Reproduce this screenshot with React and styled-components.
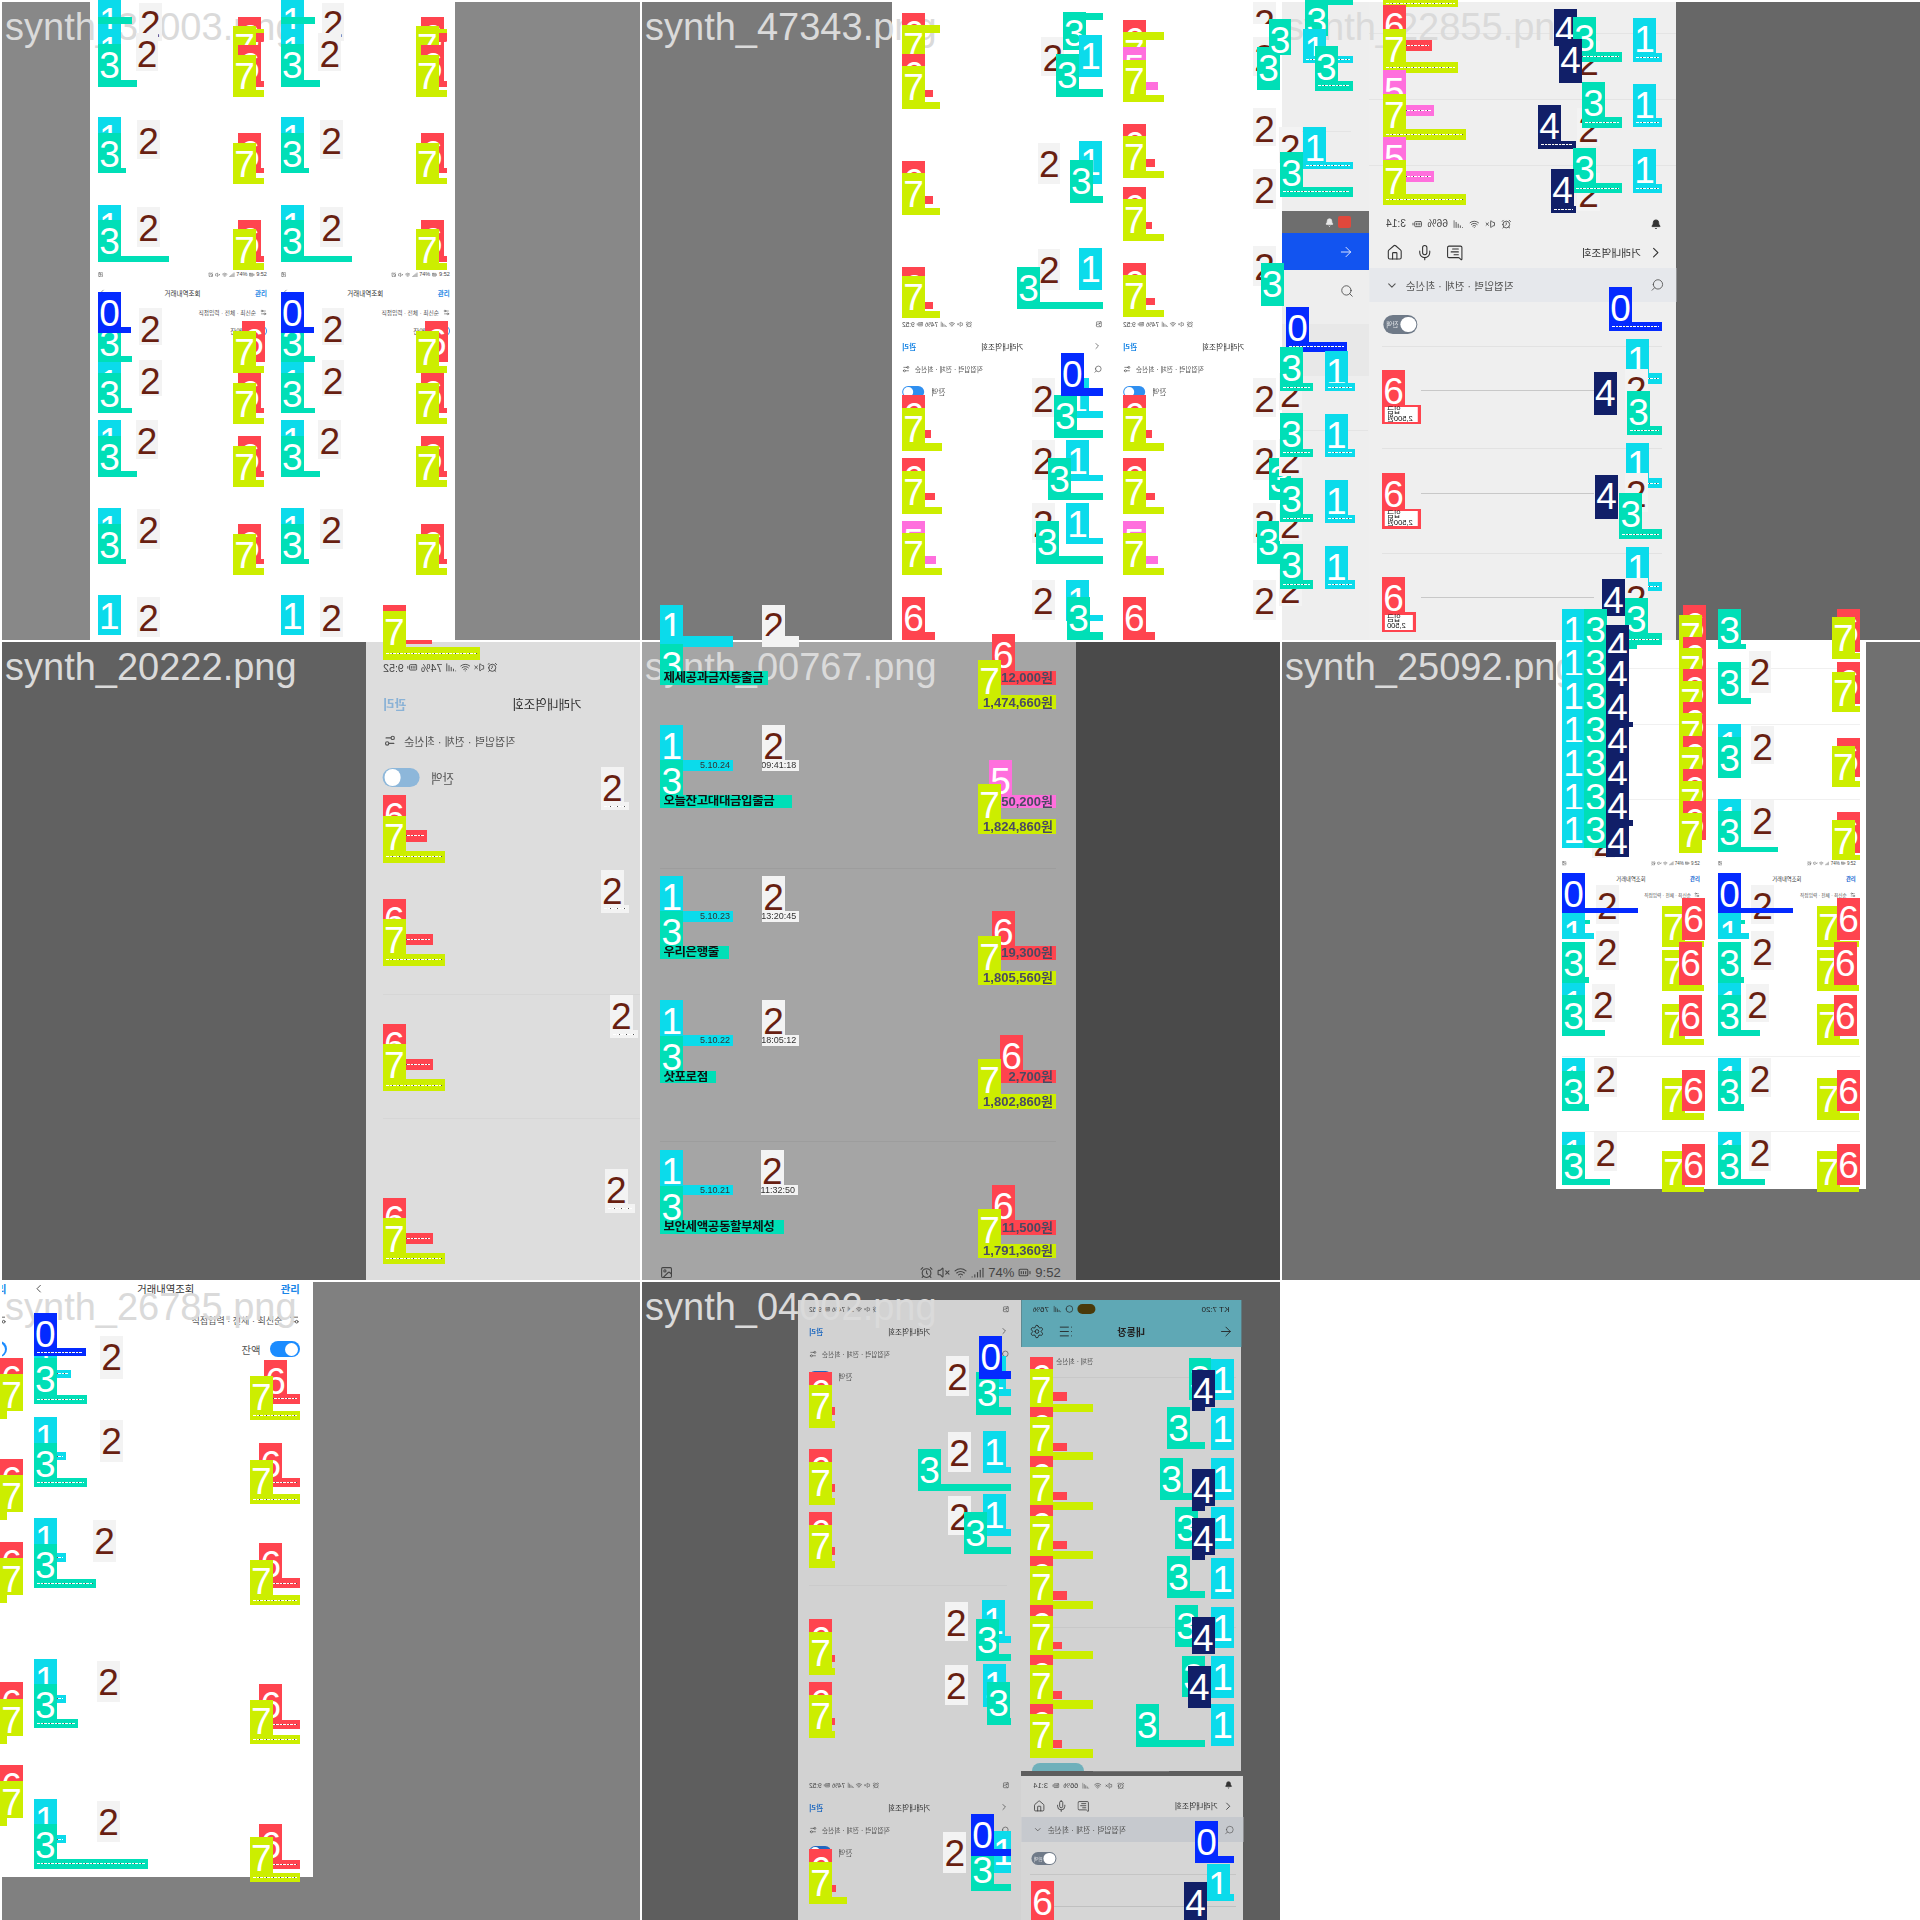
import styled, { createGlobalStyle } from "styled-components";
import {
  AlarmClock, ArrowRight, BatteryFull, Bell, ChevronDown, ChevronLeft, Circle, Home, Image,
  List, MessageSquareText, Mic, Search, Settings, Settings2, Signal, VolumeX, Wifi,
} from "lucide-react";

// every coordinate below is read off the 640px tile crops, which come at 2.45x
const U = 2.45;
const TILE = 640;

const PALETTE = {
  0: ["#042aff", "#fff"],
  1: ["#0bdbeb", "#fff"],
  2: ["#f3f3f3", "#681f11"],
  3: ["#00dfb7", "#fff"],
  4: ["#111f68", "#fff"],
  5: ["#ff6fdd", "#fff"],
  6: ["#ff444f", "#fff"],
  7: ["#ccee00", "#fff"],
};

const GlobalStyle = createGlobalStyle`
  html, body { margin: 0; background: #fff; }
  body { font-family: "Liberation Sans", "Noto Sans CJK KR", sans-serif; }
`;

const Sheet = styled.div`
  position: relative;
  width: 1920px;
  height: 1920px;
  display: grid;
  grid-template-columns: repeat(3, 640px);
  grid-auto-rows: 640px;
  overflow: hidden;
`;

const Tile = styled.section`
  position: relative;
  margin: 2px 0 0 2px;
  background: ${(p) => p.$bg};
  overflow: hidden;
`;

const Panel = styled.div`
  position: absolute;
  background: ${(p) => p.$color};
  border-radius: ${(p) => p.$round || 0}px ${(p) => p.$round || 0}px 0 0;
`;

const Rule = styled.div`
  position: absolute;
  height: 1px;
  background: ${(p) => p.$color};
`;

const Note = styled.div`
  position: absolute;
  font-size: ${(p) => p.$size}px;
  line-height: 1;
  color: #555;
  white-space: nowrap;
  transform: scaleX(-1);
`;

const Caption = styled.div`
  position: absolute;
  left: 3px;
  top: 6px;
  font-size: 38px;
  line-height: 38px;
  color: #dadada;
  white-space: nowrap;
`;

const MarkLayer = styled.div`
  position: absolute;
  inset: 0;
`;

const Mark = styled.div`
  position: absolute;
  display: flex;
  flex-direction: column;
  overflow: hidden;
`;

const Tag = styled.div`
  flex: 1 1 0;
  min-height: 0;
  width: 23px;
  max-width: 100%;
  overflow: hidden;
  text-align: center;
  font-size: 37px;
  line-height: 44px;
  background: ${(p) => PALETTE[p.$c][0]};
  color: ${(p) => PALETTE[p.$c][1]};
`;

const Bar = styled.div`
  flex: none;
  display: flex;
  align-items: center;
  justify-content: ${(p) => (p.$c === 3 ? "flex-start" : "flex-end")};
  padding: 0 3px;
  box-sizing: border-box;
  overflow: hidden;
  background: ${(p) => PALETTE[p.$c][0]};
`;

const Speck = styled.i`
  display: block;
  flex: 1;
  height: 1px;
  background: repeating-linear-gradient(90deg, #fff 0 3px, transparent 3px 4px, #fff 4px 6px, #555 6px 7px);
`;

const BarText = styled.span`
  font-size: ${(p) => (p.$c === 3 ? 12.5 : p.$c >= 5 ? 13 : 9)}px;
  font-weight: ${(p) => (p.$c === 3 || p.$c >= 5 ? 700 : 400)};
  line-height: 1;
  white-space: nowrap;
  filter: blur(0.55px);
  letter-spacing: ${(p) => (p.$c === 3 ? "-0.4px" : "0")};
  color: ${(p) => (p.$c === 3 ? "#111" : p.$c >= 5 ? "#4a4a62" : "#333")};
`;

const Slip = styled.span`
  flex: 1;
  background: #fff;
  color: #111;
  font-size: 7.5px;
  line-height: 7.5px;
  padding: 0 2px;
  text-align: right;
  white-space: pre-line;
  transform: scaleX(-1);
`;

const ScreenBlock = styled.div`
  position: absolute;
  width: 26em;
  display: flex;
  flex-direction: column;
  color: ${(p) => p.$ink || "#333"};
  transform: ${(p) => (p.$flip ? "scaleX(-1)" : "none")};
`;

const StatusRow = styled.div`
  height: 2.54em;
  display: flex;
  align-items: center;
  justify-content: space-between;
  font-size: 1em;
`;

const StatusGroup = styled.div`
  display: flex;
  align-items: center;
  gap: 0.3em;
  font-size: 0.85em;
  color: #444;
`;

const TitleRow = styled.div`
  height: 3.1em;
  display: grid;
  grid-template-columns: 1fr auto 1fr;
  align-items: center;
`;

const Accent = styled.span`
  justify-self: end;
  font-weight: 700;
  color: ${(p) => p.$color};
`;

const FilterRow = styled.div`
  height: 2.9em;
  display: flex;
  align-items: center;
  justify-content: space-between;
  color: #555;
  font-size: 1em;
`;

const FilterLabel = styled.div`
  display: flex;
  align-items: center;
  gap: 0.7em;
  font-size: 0.88em;
`;

const ToggleRow = styled.div`
  height: 2.9em;
  display: flex;
  align-items: center;
  justify-content: flex-end;
  gap: 0.9em;
  font-size: 1em;
  color: #555;
`;

const Toggle = styled.span`
  position: relative;
  display: flex;
  align-items: center;
  justify-content: flex-end;
  width: 2.9em;
  height: 1.55em;
  padding: 0 0.12em;
  box-sizing: border-box;
  border-radius: 1em;
  background: ${(p) => p.$color};
  &::after {
    content: "";
    width: 1.3em;
    height: 1.3em;
    border-radius: 50%;
    background: #fff;
  }
`;

const BankBlock = styled.div`
  position: absolute;
  display: flex;
  flex-direction: column;
  transform: scaleX(-1);
  color: #333;
`;

const BankStatus = styled.div`
  height: 2.4em;
  padding: 0 1.6em 0 1.4em;
  display: flex;
  align-items: center;
  justify-content: space-between;
`;

const BankGroup = styled(StatusGroup)`
  gap: 0.55em;
  font-size: 0.95em;
`;

const BankTitle = styled.div`
  height: 2.9em;
  padding: 0 1.6em 0 1.1em;
  display: flex;
  align-items: center;
  justify-content: space-between;
  font-size: 1em;
`;

const IconRun = styled.div`
  display: flex;
  align-items: center;
  gap: ${(p) => p.$gap || 1.2}em;
`;

const BankBand = styled.div`
  height: 3.2em;
  padding: 0 1.5em 0 1.1em;
  display: flex;
  align-items: center;
  justify-content: space-between;
  background: ${(p) => p.$color};
  color: #555;
`;

const BankToggleRow = styled.div`
  height: 4.1em;
  padding: 0 1.3em;
  display: flex;
  align-items: center;
  justify-content: flex-end;
`;

const GreyToggle = styled.span`
  width: 3.2em;
  height: 1.7em;
  padding: 0 0.12em;
  box-sizing: border-box;
  display: flex;
  align-items: center;
  justify-content: space-between;
  border-radius: 1em;
  background: #6f7a88;
  color: #e4e6e9;
  font-size: 1em;
  &::before {
    content: "";
    width: 1.45em;
    height: 1.45em;
    border-radius: 50%;
    background: #fff;
  }
`;

const ToggleText = styled.span`
  font-size: 0.62em;
  padding-right: 0.3em;
`;

const Slice = styled.div`
  position: absolute;
  display: flex;
  flex-direction: column;
`;

const SliceBand = styled.div`
  height: ${(p) => p.$h}px;
  padding-right: ${(p) => p.$pad || 16}px;
  display: flex;
  align-items: center;
  justify-content: flex-end;
  gap: 4px;
  background: ${(p) => p.$color};
  color: ${(p) => p.$ink || "#444"};
`;

const TealBlock = styled.div`
  position: absolute;
  display: flex;
  flex-direction: column;
  transform: scaleX(-1);
  color: #222;
  background: #5fa8b5;
`;

const TealStatus = styled.div`
  height: 18px;
  padding: 0 12px;
  display: flex;
  align-items: center;
  justify-content: space-between;
  font-size: 8px;
`;

const TealTitle = styled.div`
  height: 26px;
  padding: 0 8px;
  display: grid;
  grid-template-columns: 1fr auto 1fr;
  align-items: center;
  font-size: 10px;
  font-weight: 700;
`;

const TealIcons = styled(IconRun)`
  justify-self: end;
`;

const MirrorArrow = styled(ArrowRight)`
  transform: scaleX(-1);
`;

const Pill = styled.span`
  display: inline-block;
  width: 18px;
  height: 10px;
  border-radius: 5px;
  background: #4a3a0a;
`;

const Dot = styled.span`
  display: inline-block;
  width: 0.8em;
  height: 0.8em;
  border-radius: 2px;
  background: ${(p) => p.$color};
`;

const at = (x, y) => ({ left: x / U - 2, top: y / U - 2 });

function StatusIcons() {
  return (
    <StatusGroup>
      <AlarmClock size="1em" />
      <VolumeX size="1em" />
      <Wifi size="1em" />
      <Signal size="1em" />
      <span>74%</span>
      <BatteryFull size="1em" />
      <span>9:52</span>
    </StatusGroup>
  );
}

function TradeScreen({ x, y, em, flip, accent = "#1e88e5", toggle = "#2f8ff0", ink }) {
  return (
    <ScreenBlock
      $flip={flip}
      $ink={ink}
      style={{ ...at(x, y), marginTop: -1.27 * em, fontSize: em }}
    >
      <StatusRow>
        <StatusGroup>
          <Image size="1em" />
        </StatusGroup>
        <StatusIcons />
      </StatusRow>
      <TitleRow>
        <ChevronLeft size="1.3em" strokeWidth={1.5} />
        <span>거래내역조회</span>
        <Accent $color={accent}>관리</Accent>
      </TitleRow>
      <FilterRow>
        <Search size="1.1em" />
        <FilterLabel>
          직접입력 · 전체 · 최신순
          <Settings2 size="1.2em" />
        </FilterLabel>
      </FilterRow>
      <ToggleRow>
        <span>잔액</span>
        <Toggle $color={toggle} />
      </ToggleRow>
    </ScreenBlock>
  );
}

function BankScreen({ x, y, em, w, band = "#e6e8ec" }) {
  return (
    <BankBlock style={{ ...at(x, y), width: w / U, fontSize: em }}>
      <BankStatus>
        <Bell size="1em" fill="currentColor" />
        <BankGroup>
          <AlarmClock size="1em" />
          <VolumeX size="1em" />
          <Wifi size="1em" />
          <Signal size="1em" />
          <span>66%</span>
          <BatteryFull size="1em" />
          <span>3:14</span>
        </BankGroup>
      </BankStatus>
      <BankTitle>
        <IconRun $gap={0.6}>
          <ChevronLeft size="1.6em" strokeWidth={1.6} />
          <span>거래내역조회</span>
        </IconRun>
        <IconRun>
          <MessageSquareText size="1.6em" strokeWidth={1.5} />
          <Mic size="1.6em" strokeWidth={1.5} />
          <Home size="1.6em" strokeWidth={1.5} />
        </IconRun>
      </BankTitle>
      <BankBand $color={band}>
        <Search size="1.3em" strokeWidth={1.5} />
        <IconRun $gap={0.7}>
          직접입력 · 전체 · 최신순
          <ChevronDown size="1.2em" />
        </IconRun>
      </BankBand>
      <BankToggleRow>
        <GreyToggle>
          <ToggleText>잔액</ToggleText>
        </GreyToggle>
      </BankToggleRow>
    </BankBlock>
  );
}

// [class, x, y, right, bottom, bar height, bar text]
const row67 = (x6, y6, r6, x7, y7, r7, bar6 = 18, bar7 = 18) => [
  [6, x6, y6, r6, y6 + 104, bar6],
  [7, x7, y7, r7, y7 + 104, bar7],
];

const sheet0 = [
  [1, 240, 0, 296, 70, 0], [3, 240, 42, 323, 60, 18], [1, 240, 72, 296, 108, 0],
  [3, 240, 108, 335, 212, 17], [2, 340, 8, 396, 100, 0], [2, 332, 80, 388, 175, 0],
  [6, 583, 42, 647, 112, 0], [7, 571, 70, 647, 82, 12], [7, 571, 64, 627, 135, 0], [6, 627, 82, 647, 102, 0],
  [6, 583, 110, 647, 212, 13], [7, 571, 135, 647, 238, 17],
  [1, 240, 287, 296, 330, 0], [3, 240, 325, 308, 425, 13], [2, 336, 293, 392, 390, 0],
  [6, 583, 326, 647, 425, 13], [7, 571, 350, 647, 452, 17],
  [1, 240, 502, 296, 545, 0], [3, 240, 540, 414, 642, 14], [2, 336, 507, 392, 604, 0],
  [6, 583, 540, 647, 642, 14], [7, 571, 560, 647, 662, 17],
  [3, 240, 790, 323, 887, 14], [0, 240, 715, 321, 815, 15], [2, 340, 754, 396, 845, 0],
  [6, 593, 786, 649, 887, 0], [7, 571, 810, 647, 913, 17],
  [1, 240, 887, 296, 930, 0], [3, 240, 915, 323, 1013, 13], [2, 340, 882, 396, 970, 0],
  [6, 583, 915, 647, 1013, 13], [7, 571, 938, 647, 1040, 17],
  [1, 240, 1030, 296, 1075, 0], [3, 240, 1068, 335, 1168, 15], [2, 332, 1030, 388, 1125, 0],
  [6, 583, 1068, 647, 1168, 13], [7, 571, 1093, 647, 1192, 17],
  [1, 240, 1245, 296, 1290, 0], [3, 240, 1283, 308, 1383, 13], [2, 336, 1248, 392, 1345, 0],
  [6, 583, 1283, 647, 1383, 13], [7, 571, 1308, 647, 1408, 17],
  [1, 240, 1458, 296, 1555, 0], [2, 336, 1462, 392, 1560, 0],
];

const sheet1Left = [
  [6, 642, 32, 718, 132, 0], [7, 642, 62, 735, 80, 18], [7, 642, 62, 698, 132, 0],
  [6, 642, 132, 718, 238, 18], [7, 642, 162, 735, 267, 17],
  ...row67(642, 395, 718, 642, 424, 735),
  ...row67(642, 655, 698, 642, 676, 735),
  [6, 698, 740, 718, 757, 17],
  ...row67(642, 968, 714, 642, 1000, 740),
  ...row67(642, 1122, 723, 642, 1155, 740),
  [5, 642, 1277, 725, 1381, 18], [7, 642, 1306, 740, 1410, 18],
  [6, 642, 1463, 723, 1568, 20],
];

const sheet1Right = [
  [2, 983, 90, 1040, 185, 0], [3, 1036, 32, 1134, 50, 18], [3, 1036, 30, 1092, 122, 0],
  [1, 1076, 85, 1132, 188, 0], [3, 1019, 132, 1134, 237, 18],
  [2, 975, 351, 1030, 450, 0], [1, 1076, 345, 1132, 450, 0], [3, 1053, 393, 1134, 497, 17],
  [2, 975, 610, 1030, 710, 0], [1, 1076, 608, 1132, 710, 0], [3, 924, 654, 1134, 757, 17],
  [2, 960, 925, 1016, 1022, 0], [1, 1044, 925, 1134, 1024, 16], [3, 1014, 968, 1134, 1072, 19],
  [0, 1031, 865, 1134, 970, 20],
  [2, 960, 1078, 1016, 1175, 0], [1, 1044, 1078, 1134, 1178, 15], [3, 1000, 1122, 1134, 1226, 18],
  [2, 960, 1232, 1016, 1330, 0], [1, 1044, 1232, 1134, 1332, 15], [3, 970, 1276, 1134, 1381, 19],
  [2, 960, 1420, 1016, 1520, 0], [1, 1044, 1420, 1134, 1522, 15], [3, 1046, 1463, 1134, 1568, 20],
];

const sheet1Col = [
  [6, 1183, 48, 1239, 148, 0], [7, 1183, 78, 1283, 98, 20], [7, 1183, 78, 1239, 148, 0],
  [5, 1183, 115, 1269, 220, 18], [7, 1183, 147, 1283, 251, 18],
  ...row67(1183, 304, 1263, 1183, 333, 1283),
  ...row67(1183, 458, 1254, 1183, 487, 1283),
  ...row67(1183, 644, 1263, 1183, 673, 1283),
  ...row67(1183, 968, 1254, 1183, 1000, 1283),
  ...row67(1183, 1122, 1263, 1183, 1155, 1283),
  [5, 1183, 1277, 1269, 1381, 19], [7, 1183, 1306, 1283, 1410, 18],
  [6, 1183, 1463, 1263, 1568, 20],
  [2, 1502, 5, 1558, 60, 0], [2, 1502, 90, 1558, 185, 0], [2, 1502, 265, 1558, 358, 0],
  [2, 1502, 415, 1558, 512, 0], [2, 1502, 602, 1558, 700, 0],
  [2, 1502, 925, 1558, 1022, 0], [2, 1502, 1078, 1558, 1175, 0],
  [2, 1502, 1232, 1558, 1330, 0], [2, 1502, 1420, 1558, 1520, 0],
  [3, 1512, 115, 1568, 220, 0], [3, 1521, 645, 1577, 750, 0],
  [3, 1540, 1122, 1596, 1226, 0], [3, 1512, 1277, 1568, 1381, 0],
];

const sheet2 = [
  [3, -28, 47, 28, 135, 0], [3, 62, -14, 180, 12, 12], [3, 62, 0, 118, 88, 0],
  [1, 57, 70, 180, 155, 17], [3, 85, 113, 180, 222, 24],
  [2, -3, 310, 53, 400, 0], [1, 57, 312, 180, 415, 17], [3, 0, 372, 180, 482, 24],
  [2, -3, 915, 53, 1005, 0], [0, 15, 752, 163, 862, 24], [3, 0, 850, 82, 959, 21], [1, 110, 860, 183, 959, 21],
  [2, -3, 1075, 53, 1165, 0], [3, 0, 1012, 82, 1120, 21], [1, 110, 1014, 183, 1120, 21],
  [2, -3, 1235, 53, 1325, 0], [3, 0, 1172, 82, 1280, 21], [1, 110, 1176, 183, 1282, 21],
  [2, -3, 1395, 53, 1485, 0], [3, 0, 1334, 82, 1442, 21], [1, 110, 1338, 183, 1442, 21],

  [7, 252, -10, 435, 18, 18],
  [6, 252, 12, 372, 125, 27], [7, 252, 70, 435, 180, 27],
  [5, 252, 172, 377, 284, 27], [7, 252, 230, 456, 342, 27],
  [5, 252, 335, 377, 445, 27], [7, 252, 392, 456, 502, 27],

  [2, 728, 100, 784, 195, 0], [4, 671, 22, 728, 113, 0], [3, 718, 42, 838, 152, 25], [1, 865, 44, 936, 152, 22],
  [4, 684, 95, 740, 203, 15],
  [2, 728, 265, 784, 358, 0], [3, 740, 201, 838, 313, 26], [1, 865, 206, 936, 310, 22], [4, 632, 257, 724, 364, 19],
  [2, 728, 425, 784, 518, 0], [3, 718, 363, 838, 474, 26], [1, 865, 365, 936, 472, 22], [4, 664, 414, 725, 522, 17],

  [0, 806, 703, 936, 812, 22],
  [1, 848, 831, 936, 940, 25], [2, 845, 905, 901, 1005, 0], [4, 769, 911, 825, 1016, 0], [3, 850, 958, 936, 1065, 21],
  [6, 250, 906, 345, 1039, 46, "입금\n2,500원"],
  [1, 848, 1085, 936, 1196, 25], [2, 845, 1160, 901, 1255, 0], [4, 772, 1164, 828, 1272, 0], [3, 831, 1208, 936, 1320, 23],
  [6, 250, 1160, 345, 1296, 49, "입금\n2,500원"],
  [1, 848, 1340, 936, 1448, 21], [2, 845, 1415, 901, 1510, 0], [4, 789, 1419, 845, 1510, 0], [3, 845, 1465, 936, 1580, 28],
  [6, 250, 1414, 333, 1548, 48, "입금\n2,500"],
];

const sheet3 = [
  [6, 938, -86, 1058, 10, 10], [7, 938, -72, 1175, 48, 30],
  [2, 1472, 311, 1542, 417, 20], [6, 938, 380, 1046, 495, 30], [7, 938, 431, 1090, 546, 30],
  [2, 1472, 563, 1542, 669, 20], [6, 938, 634, 1062, 747, 27], [7, 938, 683, 1090, 798, 28],
  [2, 1494, 870, 1564, 976, 20], [6, 938, 941, 1062, 1053, 27], [7, 938, 989, 1090, 1105, 29],
  [2, 1482, 1296, 1555, 1403, 20], [6, 938, 1367, 1062, 1479, 27], [7, 938, 1416, 1090, 1530, 28],
];

const sheet4 = [
  [1, 50, -86, 228, 17, 27], [2, 299, -86, 390, 17, 27],
  [3, 50, 10, 313, 110, 35, "제세공과금자동출금"],
  [6, 862, -14, 1019, 110, 34, "12,000원"], [7, 828, 50, 1019, 170, 35, "1,474,660원"],
  [1, 50, 208, 228, 320, 26, "5.10.24"], [2, 299, 208, 390, 320, 26, "09:41:18"],
  [3, 50, 295, 372, 412, 32, "오늘잔고대대금입출금"],
  [5, 855, 294, 1019, 412, 32, "50,200원"], [7, 828, 353, 1019, 475, 36, "1,824,860원"],
  [1, 50, 578, 228, 690, 26, "5.10.23"], [2, 299, 578, 390, 690, 26, "13:20:45"],
  [3, 50, 665, 217, 782, 32, "우리은행출"],
  [6, 862, 664, 1019, 783, 33, "19,300원"], [7, 828, 724, 1019, 845, 34, "1,805,560원"],
  [1, 50, 882, 228, 994, 26, "5.10.22"], [2, 299, 882, 390, 994, 26, "18:05:12"],
  [3, 50, 970, 185, 1086, 31, "삿포로점"],
  [6, 882, 967, 1019, 1086, 33, "2,700원"], [7, 828, 1027, 1019, 1148, 36, "1,802,860원"],
  [1, 50, 1249, 228, 1361, 26, "5.10.21"], [2, 296, 1249, 387, 1361, 26, "11:32:50"],
  [3, 50, 1337, 352, 1455, 33, "보안세액공동할부체성"],
  [6, 862, 1335, 1019, 1457, 35, "11,500원"], [7, 828, 1393, 1019, 1513, 33, "1,791,360원"],
];

const stackTops = [-76, 4, 86, 168, 250, 333, 413];
const fourTops = [-37, 33, 113, 196, 276, 356, 440];
const sixTops = [-86, -8, 72, 152, 235, 315, 395];
const sevenTops = [-62, 20, 100, 180, 262, 345, 425];

const sheet5 = [
  [2, 765, 445, 821, 535, 0],
  ...stackTops.flatMap((t) => [
    [1, 691, t, 747, t + 97, 0],
    [3, 745, t, 801, t + 97, 0],
  ]),
  [3, 745, 10, 875, 23, 13],
  ...fourTops.map((t) => [4, 799, t, 855, t + 92, 0]),
  [4, 799, 200, 865, 212, 12], [4, 799, 442, 865, 455, 13],
  ...sixTops.flatMap((t, i) => [
    [6, 987, t, 1043, t + 95, 0],
    [7, 978, sevenTops[i], 1034, sevenTops[i] + 98, 0],
  ]),

  [3, 1073, -75, 1142, 23, 13], [6, 1365, -75, 1421, 30, 0], [7, 1352, -56, 1421, 47, 14],
  [2, 1148, 28, 1204, 130, 0], [3, 1073, 55, 1154, 157, 14],
  [6, 1365, 55, 1421, 157, 0], [7, 1352, 78, 1421, 176, 14],
  [1, 1073, 207, 1129, 245, 0], [3, 1073, 237, 1132, 337, 0], [2, 1154, 210, 1210, 305, 0],
  [6, 1365, 240, 1421, 335, 0], [7, 1352, 260, 1421, 360, 14],
  [1, 1073, 390, 1129, 425, 0], [3, 1073, 420, 1220, 520, 12], [2, 1154, 392, 1210, 490, 0],
  [6, 1365, 421, 1421, 522, 0], [7, 1352, 440, 1421, 540, 14],

  [3, 691, 640, 759, 697, 12], [1, 691, 670, 770, 733, 15], [2, 774, 600, 830, 695, 0], [0, 691, 571, 877, 670, 13],
  [7, 936, 652, 1039, 752, 15], [6, 985, 632, 1041, 735, 0],
  [3, 691, 740, 757, 840, 14], [2, 774, 712, 830, 808, 0],
  [7, 936, 760, 1039, 861, 16], [6, 978, 740, 1034, 845, 0],
  [1, 691, 840, 747, 880, 0], [3, 691, 870, 797, 970, 15], [2, 764, 842, 820, 935, 0],
  [7, 936, 892, 1039, 992, 14], [6, 978, 870, 1034, 970, 0],
  [1, 691, 1023, 747, 1060, 0], [3, 691, 1055, 757, 1155, 18], [2, 770, 1025, 826, 1120, 0],
  [7, 936, 1073, 1039, 1175, 15], [6, 985, 1053, 1041, 1155, 0],
  [1, 691, 1205, 747, 1245, 0], [3, 691, 1237, 808, 1335, 15], [2, 770, 1205, 826, 1300, 0],
  [7, 936, 1252, 1039, 1352, 12], [6, 985, 1235, 1041, 1335, 0],

  [3, 1073, 640, 1139, 697, 12], [1, 1073, 670, 1150, 733, 15], [2, 1154, 600, 1210, 695, 0], [0, 1073, 571, 1257, 670, 13],
  [7, 1316, 652, 1419, 752, 15], [6, 1365, 632, 1421, 735, 0],
  [3, 1073, 740, 1137, 840, 14], [2, 1154, 712, 1210, 808, 0],
  [7, 1316, 760, 1419, 861, 16], [6, 1357, 740, 1415, 845, 0],
  [1, 1073, 840, 1129, 880, 0], [3, 1073, 870, 1176, 970, 15], [2, 1142, 842, 1198, 935, 0],
  [7, 1316, 892, 1419, 992, 14], [6, 1357, 870, 1417, 970, 0],
  [1, 1073, 1023, 1129, 1060, 0], [3, 1073, 1055, 1137, 1155, 18], [2, 1148, 1025, 1204, 1120, 0],
  [7, 1316, 1073, 1419, 1175, 15], [6, 1365, 1053, 1421, 1155, 0],
  [1, 1073, 1205, 1129, 1245, 0], [3, 1073, 1237, 1188, 1335, 15], [2, 1148, 1205, 1204, 1300, 0],
  [7, 1316, 1252, 1419, 1352, 12], [6, 1365, 1235, 1421, 1335, 0],
];

const sheet6 = [
  ...[[190, 230], [438, 478], [642, 681], [985, 1027], [1188, 1228]].flatMap(([s, t]) => [
    [6, 0, s, 56, s + 60, 0],
    [7, 0, t, 56, t + 90, 0],
    [7, 0, t + 90, 17, t + 110, 0],
  ]),
  [1, 83, 140, 174, 240, 20], [3, 83, 190, 213, 303, 21], [0, 83, 80, 211, 187, 20], [2, 245, 137, 301, 242, 0],
  [6, 647, 195, 735, 303, 23], [7, 612, 235, 735, 342, 20],
  [1, 83, 336, 162, 442, 20], [3, 83, 400, 213, 507, 22], [2, 245, 343, 301, 445, 0],
  [6, 635, 399, 735, 507, 22], [7, 612, 440, 735, 549, 24],
  [1, 83, 583, 162, 690, 20], [3, 83, 648, 235, 755, 22], [2, 228, 588, 284, 692, 0],
  [6, 635, 644, 735, 755, 25], [7, 612, 686, 735, 796, 24],
  [1, 83, 929, 162, 1036, 20], [3, 83, 990, 191, 1098, 22], [2, 238, 933, 294, 1035, 0],
  [6, 635, 990, 735, 1100, 22], [7, 612, 1030, 735, 1138, 23],
  [1, 83, 1272, 162, 1380, 20], [3, 83, 1333, 363, 1442, 23], [2, 238, 1276, 294, 1378, 0],
  [6, 635, 1333, 735, 1443, 23], [7, 612, 1365, 735, 1475, 23],
];

const leftRows7 = [
  [[2, 750, 185, 806, 283, 0], [1, 840, 185, 909, 285, 18], [3, 823, 225, 909, 330, 18]],
  [[2, 755, 372, 811, 470, 0], [1, 840, 370, 909, 472, 15], [3, 681, 414, 909, 517, 17]],
  [[2, 755, 528, 811, 625, 0], [1, 840, 524, 909, 627, 18], [3, 794, 568, 909, 672, 17]],
  [[2, 747, 790, 803, 885, 0], [1, 838, 785, 909, 890, 18], [3, 823, 830, 909, 933, 17]],
  [[2, 747, 944, 803, 1042, 0], [1, 840, 940, 896, 1045, 0], [3, 850, 985, 909, 1090, 17]],
].flat();

const sheet7 = [
  ...leftRows7,
  [0, 831, 137, 909, 243, 19],
  ...[225, 414, 568, 831, 985].flatMap((t) => [
    [6, 414, t, 478, t + 105, 18],
    [7, 414, t + 32, 478, t + 137, 17],
  ]),
  [1, 865, 1350, 909, 1452, 16], [2, 743, 1352, 799, 1452, 0], [3, 811, 1395, 909, 1498, 18],
  [0, 811, 1308, 909, 1410, 17],
  [6, 414, 1395, 480, 1500, 18], [7, 414, 1425, 507, 1530, 18],

  ...[
    [188, 218, 1046, 21], [310, 336, 1046, 18], [432, 458, 1046, 20], [552, 578, 1046, 20],
    [675, 700, 1046, 20], [797, 822, 1034, 18], [918, 944, 1034, 20], [1038, 1064, 1034, 20],
  ].flatMap(([a, b, r, bar]) => [
    [6, 955, a, r, a + 108, bar],
    [7, 955, b, 1110, b + 106, 20],
  ]),
  ...[193, 314, 436, 557, 680, 800, 921, 1040].map((t) => [1, 1399, t, 1455, t + 102, 0]),
  [3, 1345, 191, 1399, 295, 0], [3, 1291, 312, 1385, 415, 17], [3, 1274, 435, 1385, 538, 17],
  [3, 1311, 555, 1385, 658, 17], [3, 1291, 677, 1385, 780, 17], [3, 1311, 797, 1385, 900, 17],
  [3, 1328, 920, 1385, 1022, 17], [3, 1215, 1040, 1385, 1143, 17],
  [4, 1352, 220, 1408, 310, 0], [4, 1352, 463, 1408, 553, 0], [4, 1352, 583, 1408, 673, 0],
  [4, 1352, 826, 1408, 917, 0], [4, 1342, 946, 1398, 1048, 0],
  [4, 1352, 310, 1385, 322, 12], [4, 1352, 553, 1385, 565, 12], [4, 1352, 673, 1385, 685, 12],
  [1, 1389, 1430, 1455, 1522, 17], [0, 1360, 1325, 1455, 1428, 18],
  [4, 1333, 1475, 1389, 1580, 0], [6, 958, 1472, 1026, 1580, 12],
];

const TILES = [
  {
    name: "synth_32003.png", bg: "#888888",
    panels: [[220, 0, 1115, 1568, "#fff"]],
    screens: [{ x: 240, y: 672, em: 6.5 }, { x: 688, y: 672, em: 6.5 }],
    rules: [],
    marks: [...sheet0, ...sheet0.map(([c, x, y, r, b, bar]) => [c, x + 448, y, r + 448, b, bar]),
      [6, 938, 1482, 994, 1510, 0], [7, 938, 1498, 994, 1568, 0]],
  },
  {
    name: "synth_47343.png", bg: "#7a7a7a",
    panels: [[617, 0, 1568, 1568, "#fff"]],
    screens: [
      { x: 642, y: 795, em: 7.7, flip: true },
      { x: 1183, y: 795, em: 7.7, flip: true },
    ],
    rules: [],
    marks: [...sheet1Left, ...sheet1Right, ...sheet1Col],
  },
  {
    name: "synth_22855.png", bg: "#676767",
    panels: [[0, 0, 217, 1568, "#eeeeee"], [217, 0, 970, 1568, "#efefef"]],
    bank: { x: 217, y: 517, em: 10.75, w: 753 },
    slice: true,
    rules: [
      [217, 970, 82, "#e4e4e4"], [217, 970, 243, "#e4e4e4"], [217, 970, 405, "#e4e4e4"],
      [250, 935, 848, "#e2e2e2"], [345, 770, 955, "#c8c8c8"], [250, 935, 1098, "#e2e2e2"], [345, 770, 1208, "#c8c8c8"],
      [250, 935, 1356, "#e2e2e2"], [345, 770, 1463, "#c8c8c8"], [5, 175, 322, "#e4e4e4"], [5, 215, 1053, "#e4e4e4"],
    ],
    marks: sheet2, speck: true, slip: true,
  },
  {
    name: "synth_20222.png", bg: "#616161",
    panels: [[897, 0, 1568, 1568, "#dddddd"]],
    screens: [{ x: 938, y: 68, em: 12.6, flip: true, accent: "#8ab2d6", toggle: "#8db7da" }],
    rules: [[938, 1568, 868, "#d6d6d6"], [938, 1568, 1170, "#d6d6d6"]],
    marks: sheet3, speck: true,
  },
  {
    name: "synth_00767.png", bg: "#4a4a4a",
    panels: [[0, 0, 1068, 1568, "#a5a5a5"]],
    screens: [{ x: 50, y: 1550, em: 15.4 }],
    rules: [[50, 1020, 558, "#9d9d9d"], [50, 1020, 1228, "#9d9d9d"]],
    marks: sheet4,
  },
  {
    name: "synth_25092.png", bg: "#707070",
    panels: [[676, 0, 1436, 1345, "#fff"]],
    screens: [{ x: 691, y: 548, em: 5.3, accent: "#0a62d0" }, { x: 1073, y: 548, em: 5.3, accent: "#0a62d0" }],
    rules: [
      [691, 1420, 69, "#f0f0f0"], [691, 1420, 207, "#f0f0f0"], [691, 1420, 390, "#f0f0f0"],
      [691, 1420, 1020, "#f0f0f0"], [691, 1420, 1203, "#f0f0f0"],
    ],
    marks: sheet5,
  },
  {
    name: "synth_26785.png", bg: "#808080",
    panels: [[0, 0, 767, 1463, "#fff"]],
    screens: [
      { x: 78, y: -50, em: 10.3, accent: "#1a86e8", toggle: "#1b8cff" },
      { x: -640, y: -50, em: 10.3, accent: "#1a86e8", toggle: "#1b8cff" },
    ],
    rules: [],
    marks: sheet6, speck: true,
  },
  {
    name: "synth_04002.png", bg: "#5e5e5e",
    panels: [
      [388, 50, 933, 1568, "#d2d2d2"], [933, 165, 1473, 1204, "#d2d2d2"],
      [960, 1183, 1088, 1204, "#6fb0bb", 20], [933, 1215, 1478, 1568, "#d6d6d6"],
    ],
    screens: [
      { x: 414, y: 72, em: 7.7, flip: true, accent: "#2a6fc0", toggle: "#2166c0" },
      { x: 414, y: 1238, em: 7.7, flip: true, accent: "#2a6fc0", toggle: "#2166c0" },
    ],
    bank: { x: 933, y: 1215, em: 7.8, w: 545, band: "#c6c9ce" },
    teal: true,
    notes: [[1018, 194, "전체 · 최신순", 6.8]],
    rules: [[1110, 1297, 1204, "#777"], [955, 1460, 1455, "#c5c5c5"], [1010, 1460, 1533, "#c0c0c0"],
      [955, 1460, 237, "#c8c8c8"], [955, 1460, 850, "#c8c8c8"], [414, 900, 748, "#cbcbcb"]],
    marks: sheet7,
  },
  { name: "", bg: "#fff", panels: [], rules: [], marks: [] },
];

function LeftSlice() {
  return (
    <Slice style={{ ...at(0, 517), width: 217 / U }}>
      <SliceBand $h={22} $pad={18} $color="#6e6e6e" $ink="#e8e8e8">
        <Bell size={9} fill="#e8e8e8" />
        <Dot $color="#e0483c" />
      </SliceBand>
      <SliceBand $h={37} $pad={15} $color="#1254f0" $ink="#e8eeff">
        <ArrowRight size={16} strokeWidth={1.4} />
      </SliceBand>
      <SliceBand $h={42} $pad={15} $color="#eeeeee">
        <Search size={14} strokeWidth={1.4} />
      </SliceBand>
      <SliceBand $h={12} $color="#eeeeee" />
      <SliceBand $h={52} $color="#e8e8e8" />
    </Slice>
  );
}

function TealHeader() {
  return (
    <TealBlock style={{ ...at(933, 50), width: 540 / U, height: 115 / U }}>
      <TealStatus>
        <span>KT 7:20</span>
        <IconRun $gap={0.5}>
          <Pill />
          <Circle size="1em" />
          <Signal size="1em" />
          <span>76%</span>
        </IconRun>
      </TealStatus>
      <TealTitle>
        <MirrorArrow size={15} strokeWidth={1.4} />
        <span>내통장</span>
        <TealIcons $gap={1.4}>
          <List size={15} strokeWidth={1.4} />
          <Settings size={15} strokeWidth={1.4} />
        </TealIcons>
      </TealTitle>
    </TealBlock>
  );
}

function Annotation({ m, col, row, speck, slip }) {
  const [c, x, y, right, bottom, bar = 0, text] = m;
  const height = (bottom - y) / U;
  return (
    <Mark
      style={{
        left: x / U + col * TILE,
        top: y / U + row * TILE,
        width: (right - x) / U,
        height,
      }}
    >
      <Tag $c={c}>{height > 8 && bar / U < height ? c : ""}</Tag>
      {bar > 0 && (
        <Bar $c={c} style={{ height: bar / U }}>
          {text && !slip && <BarText $c={c}>{text}</BarText>}
          {text && slip && <Slip>{text}</Slip>}
          {!text && speck && bar > 15 && <Speck />}
        </Bar>
      )}
    </Mark>
  );
}

export default function App() {
  return (
    <Sheet>
      <GlobalStyle />
      {TILES.map((t) => (
        <Tile key={t.name || "blank"} $bg={t.bg}>
          {t.panels.map(([x, y, r, b, color, round]) => (
            <Panel
              key={`${x}-${y}`}
              $color={color}
              $round={round}
              style={{ ...at(x, y), width: (r - x) / U, height: (b - y) / U }}
            />
          ))}
          {t.rules.map(([x, r, y, color]) => (
            <Rule key={`${x}-${y}`} $color={color} style={{ ...at(x, y), width: (r - x) / U }} />
          ))}
          {t.slice && <LeftSlice />}
          {(t.screens || []).map((s) => (
            <TradeScreen key={`${s.x}-${s.y}`} {...s} />
          ))}
          {t.teal && <TealHeader />}
          {t.bank && <BankScreen {...t.bank} />}
          {(t.notes || []).map(([x, y, text, size]) => (
            <Note key={text} $size={size} style={at(x, y)}>{text}</Note>
          ))}
          {t.name && <Caption>{t.name}</Caption>}
        </Tile>
      ))}
      <MarkLayer>
        {TILES.map((t, i) =>
          t.marks.map((m, j) => (
            <Annotation
              key={`${i}-${j}`}
              m={m}
              col={i % 3}
              row={Math.floor(i / 3)}
              speck={t.speck}
              slip={t.slip}
            />
          ))
        )}
      </MarkLayer>
    </Sheet>
  );
}
